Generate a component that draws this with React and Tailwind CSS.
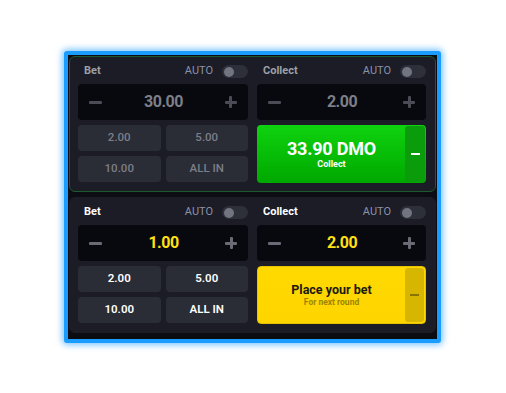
import React from "react";

function Toggle() {
  return (
    <div className="w-[26px] h-[13px] rounded-full bg-[#2d2f39] flex items-center px-[1.5px]">
      <div className="w-[10px] h-[10px] rounded-full bg-[#727480]" />
    </div>
  );
}

function Minus({ c }) {
  return <div className={`w-[13px] h-[3px] rounded-[1px] ${c}`} />;
}

function Plus({ c }) {
  return (
    <div className="relative w-[12px] h-[12px]">
      <div className={`absolute left-0 top-[4.5px] w-[12px] h-[3px] rounded-[1px] ${c}`} />
      <div className={`absolute top-0 left-[4.5px] w-[3px] h-[12px] rounded-[1px] ${c}`} />
    </div>
  );
}

function Label({ text, active }) {
  return (
    <div className="flex items-center justify-between h-[13px] pl-[6px] mb-[6px]">
      <span className={`text-[11px] font-bold ${active ? "text-white" : "text-[#9ea0a7]"}`}>{text}</span>
      <div className="flex items-center gap-[9px]">
        <span className="text-[11px] text-[#8a92aa]">AUTO</span>
        <Toggle />
      </div>
    </div>
  );
}

function Input({ value, active }) {
  const ic = active ? "bg-[#6a6c75]" : "bg-[#4b4d56]";
  return (
    <div className="h-[36px] rounded-[4px] bg-[#08090e] flex items-center justify-between px-[11px]">
      <Minus c={ic} />
      <span
        className={`text-[16px] font-bold tracking-[-0.5px] ${
          active ? "text-[#ffe014]" : "text-[#7d7f88]"
        }`}
      >
        {value}
      </span>
      <Plus c={ic} />
    </div>
  );
}

function Chip({ text, active }) {
  return (
    <div
      className={`h-[26px] rounded-[4px] bg-[#2a2c36] flex items-center justify-center text-[11.5px] ${
        active ? "text-white font-semibold" : "text-[#7c7f88] font-medium"
      }`}
    >
      {text}
    </div>
  );
}

function Panel({ active, top }) {
  return (
    <div
      className={`h-[136px] rounded-[6px] border bg-[#1b1c25] pt-[8px] pl-[8px] pr-[9px] flex gap-[9px] ${
        top ? "border-[#1c5a2e]" : "border-[#1b1c25]"
      }`}
    >
      <div className="w-[170px] flex flex-col">
        <Label text="Bet" active={active} />
        <Input value={active ? "1.00" : "30.00"} active={active} />
        <div className="grid grid-cols-2 gap-[5px] mt-[5px]">
          <Chip text="2.00" active={active} />
          <Chip text="5.00" active={active} />
          <Chip text="10.00" active={active} />
          <Chip text="ALL IN" active={active} />
        </div>
      </div>
      <div className="w-[169px] flex flex-col">
        <Label text="Collect" active={active} />
        <Input value="2.00" active={active} />
        {top ? (
          <div className="mt-[5px] h-[58px] rounded-[4px] bg-gradient-to-b from-[#0fd30f] to-[#00a800] flex items-stretch p-[1px] pr-[1px]">
            <div className="flex-1 flex flex-col items-center justify-center text-white leading-none">
              <span className="text-[18px] font-bold tracking-[-0.2px]">33.90 DMO</span>
              <span className="text-[9px] font-bold mt-[2px]">Collect</span>
            </div>
            <div className="w-[20px] rounded-[3px] bg-[#0a9c0a] flex items-center justify-center">
              <div className="w-[9px] h-[2.5px] bg-white" />
            </div>
          </div>
        ) : (
          <div className="mt-[5px] h-[58px] rounded-[4px] border border-[#e5c200] bg-gradient-to-b from-[#ffd900] to-[#ffd500] flex items-stretch py-[1px] pr-[1px]">
            <div className="flex-1 flex flex-col items-center justify-center leading-none">
              <span className="text-[12.5px] font-bold text-[#1c1a10]">Place your bet</span>
              <span className="text-[8.5px] font-bold text-[#9c8500] mt-[2px]">For next round</span>
            </div>
            <div className="w-[19px] rounded-[3px] bg-[#d6b600] flex items-center justify-center">
              <div className="w-[9px] h-[2px] bg-[#8a7400]" />
            </div>
          </div>
        )}
      </div>
    </div>
  );
}

export default function App() {
  return (
    <div
      className="w-[506px] h-[393px] bg-white pt-[51px] pl-[64px]"
      style={{ fontFamily: "Roboto, 'Noto Sans', sans-serif" }}
    >
      <div className="w-[377px] h-[292px] border-[4px] border-[#1b9cff] rounded-[3px] bg-[#0c0d13] shadow-[0_0_6px_2px_rgba(40,160,255,0.6)] pt-[1px] px-[1px] flex flex-col gap-[5px]">
        <Panel top active={false} />
        <Panel active />
      </div>
    </div>
  );
}
